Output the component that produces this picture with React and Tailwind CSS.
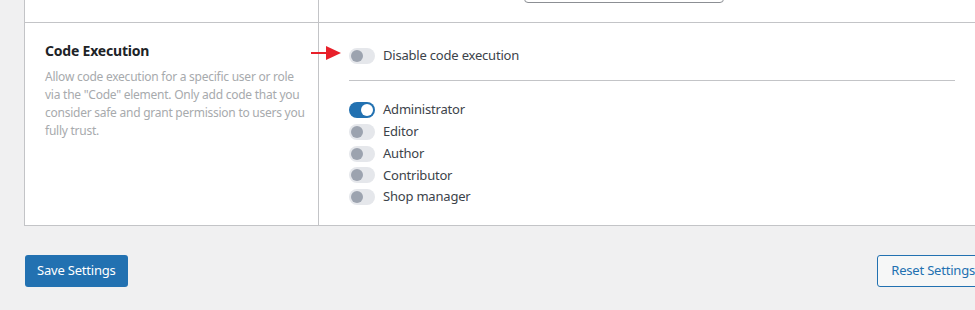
function Toggle({ on = false }) {
    return (
        <span
            className={`relative inline-flex h-4 w-[26px] shrink-0 items-center rounded-full ${
                on ? 'bg-[#2271b1]' : 'bg-[#e5e7eb]'
            }`}
        >
            <span
                className={`absolute top-[2px] h-3 w-3 rounded-full ${
                    on ? 'left-[12px] bg-white' : 'left-[2px] bg-[#9ca3af]'
                }`}
            ></span>
        </span>
    );
}

function ToggleRow({ label, on }) {
    return (
        <div className="flex h-4 items-center gap-2">
            <Toggle on={on} />
            <span className="text-[13px] tracking-[-0.2px] text-[#3c434a]">{label}</span>
        </div>
    );
}

const roles = [
    { label: 'Administrator', on: true },
    { label: 'Editor' },
    { label: 'Author' },
    { label: 'Contributor' },
    { label: 'Shop manager' },
];

export default function App() {
    return (
        <div
            className="relative h-[310px] w-[975px] overflow-hidden bg-[#f0f0f1]"
            style={{ fontFamily: '"Noto Sans", "Open Sans", sans-serif' }}
        >
            <div className="ml-[24px] w-[952px] border-x border-b border-[#c3c4c7] bg-white">
                {/* previous row, only its bottom is visible */}
                <div className="flex h-[23px] border-b border-[#c3c4c7]">
                    <div className="w-[294px] border-r border-[#c3c4c7]"></div>
                    <div className="flex-1 pl-[205px]">
                        <div className="mt-[-28px] h-[31px] w-[200px] rounded-[4px] border border-[#8c8f94]"></div>
                    </div>
                </div>

                <div className="flex h-[202px]">
                    <div className="w-[294px] border-r border-[#c3c4c7] pl-[20px] pr-3 pt-[19px]">
                        <h3 className="text-[14px] font-bold leading-[18px] tracking-[-0.2px] text-[#1d2327]">
                            Code Execution
                        </h3>
                        <p className="mt-[8px] text-[12px] leading-[18px] tracking-[-0.25px] text-[#a7aaad]">
                            Allow code execution for a specific user or role via the "Code" element. Only add code that you
                            consider safe and grant permission to users you fully trust.
                        </p>
                    </div>

                    <div className="flex-1 pl-[30px] pr-[20px] pt-[25px]">
                        <ToggleRow label="Disable code execution" />
                        <div className="mt-[16px] h-px bg-[#c3c4c7]"></div>
                        <div className="mt-[21px] flex flex-col gap-[5.75px]">
                            {roles.map((r) => (
                                <ToggleRow key={r.label} label={r.label} on={r.on} />
                            ))}
                        </div>
                    </div>
                </div>
            </div>

            <div className="mt-[29px] flex items-center justify-between pl-[25px]">
                <button className="h-[32px] rounded-[3px] bg-[#2271b1] px-[12px] text-[13px] tracking-[-0.2px] text-white">
                    Save Settings
                </button>
                <button className="mr-[-14px] h-[32px] rounded-[3px] border border-[#2271b1] bg-[#f6f7f7] px-[13px] text-[13px] tracking-[-0.2px] text-[#2271b1]">
                    Reset Settings
                </button>
            </div>

            {/* annotation arrow */}
            <svg className="absolute left-[310px] top-[45px]" width="32" height="16" viewBox="0 0 32 16">
                <line x1="1" y1="8" x2="18" y2="8" stroke="#e8202a" strokeWidth="2" />
                <polygon points="16,1 31,8 16,15" fill="#e8202a" />
            </svg>
        </div>
    );
}
